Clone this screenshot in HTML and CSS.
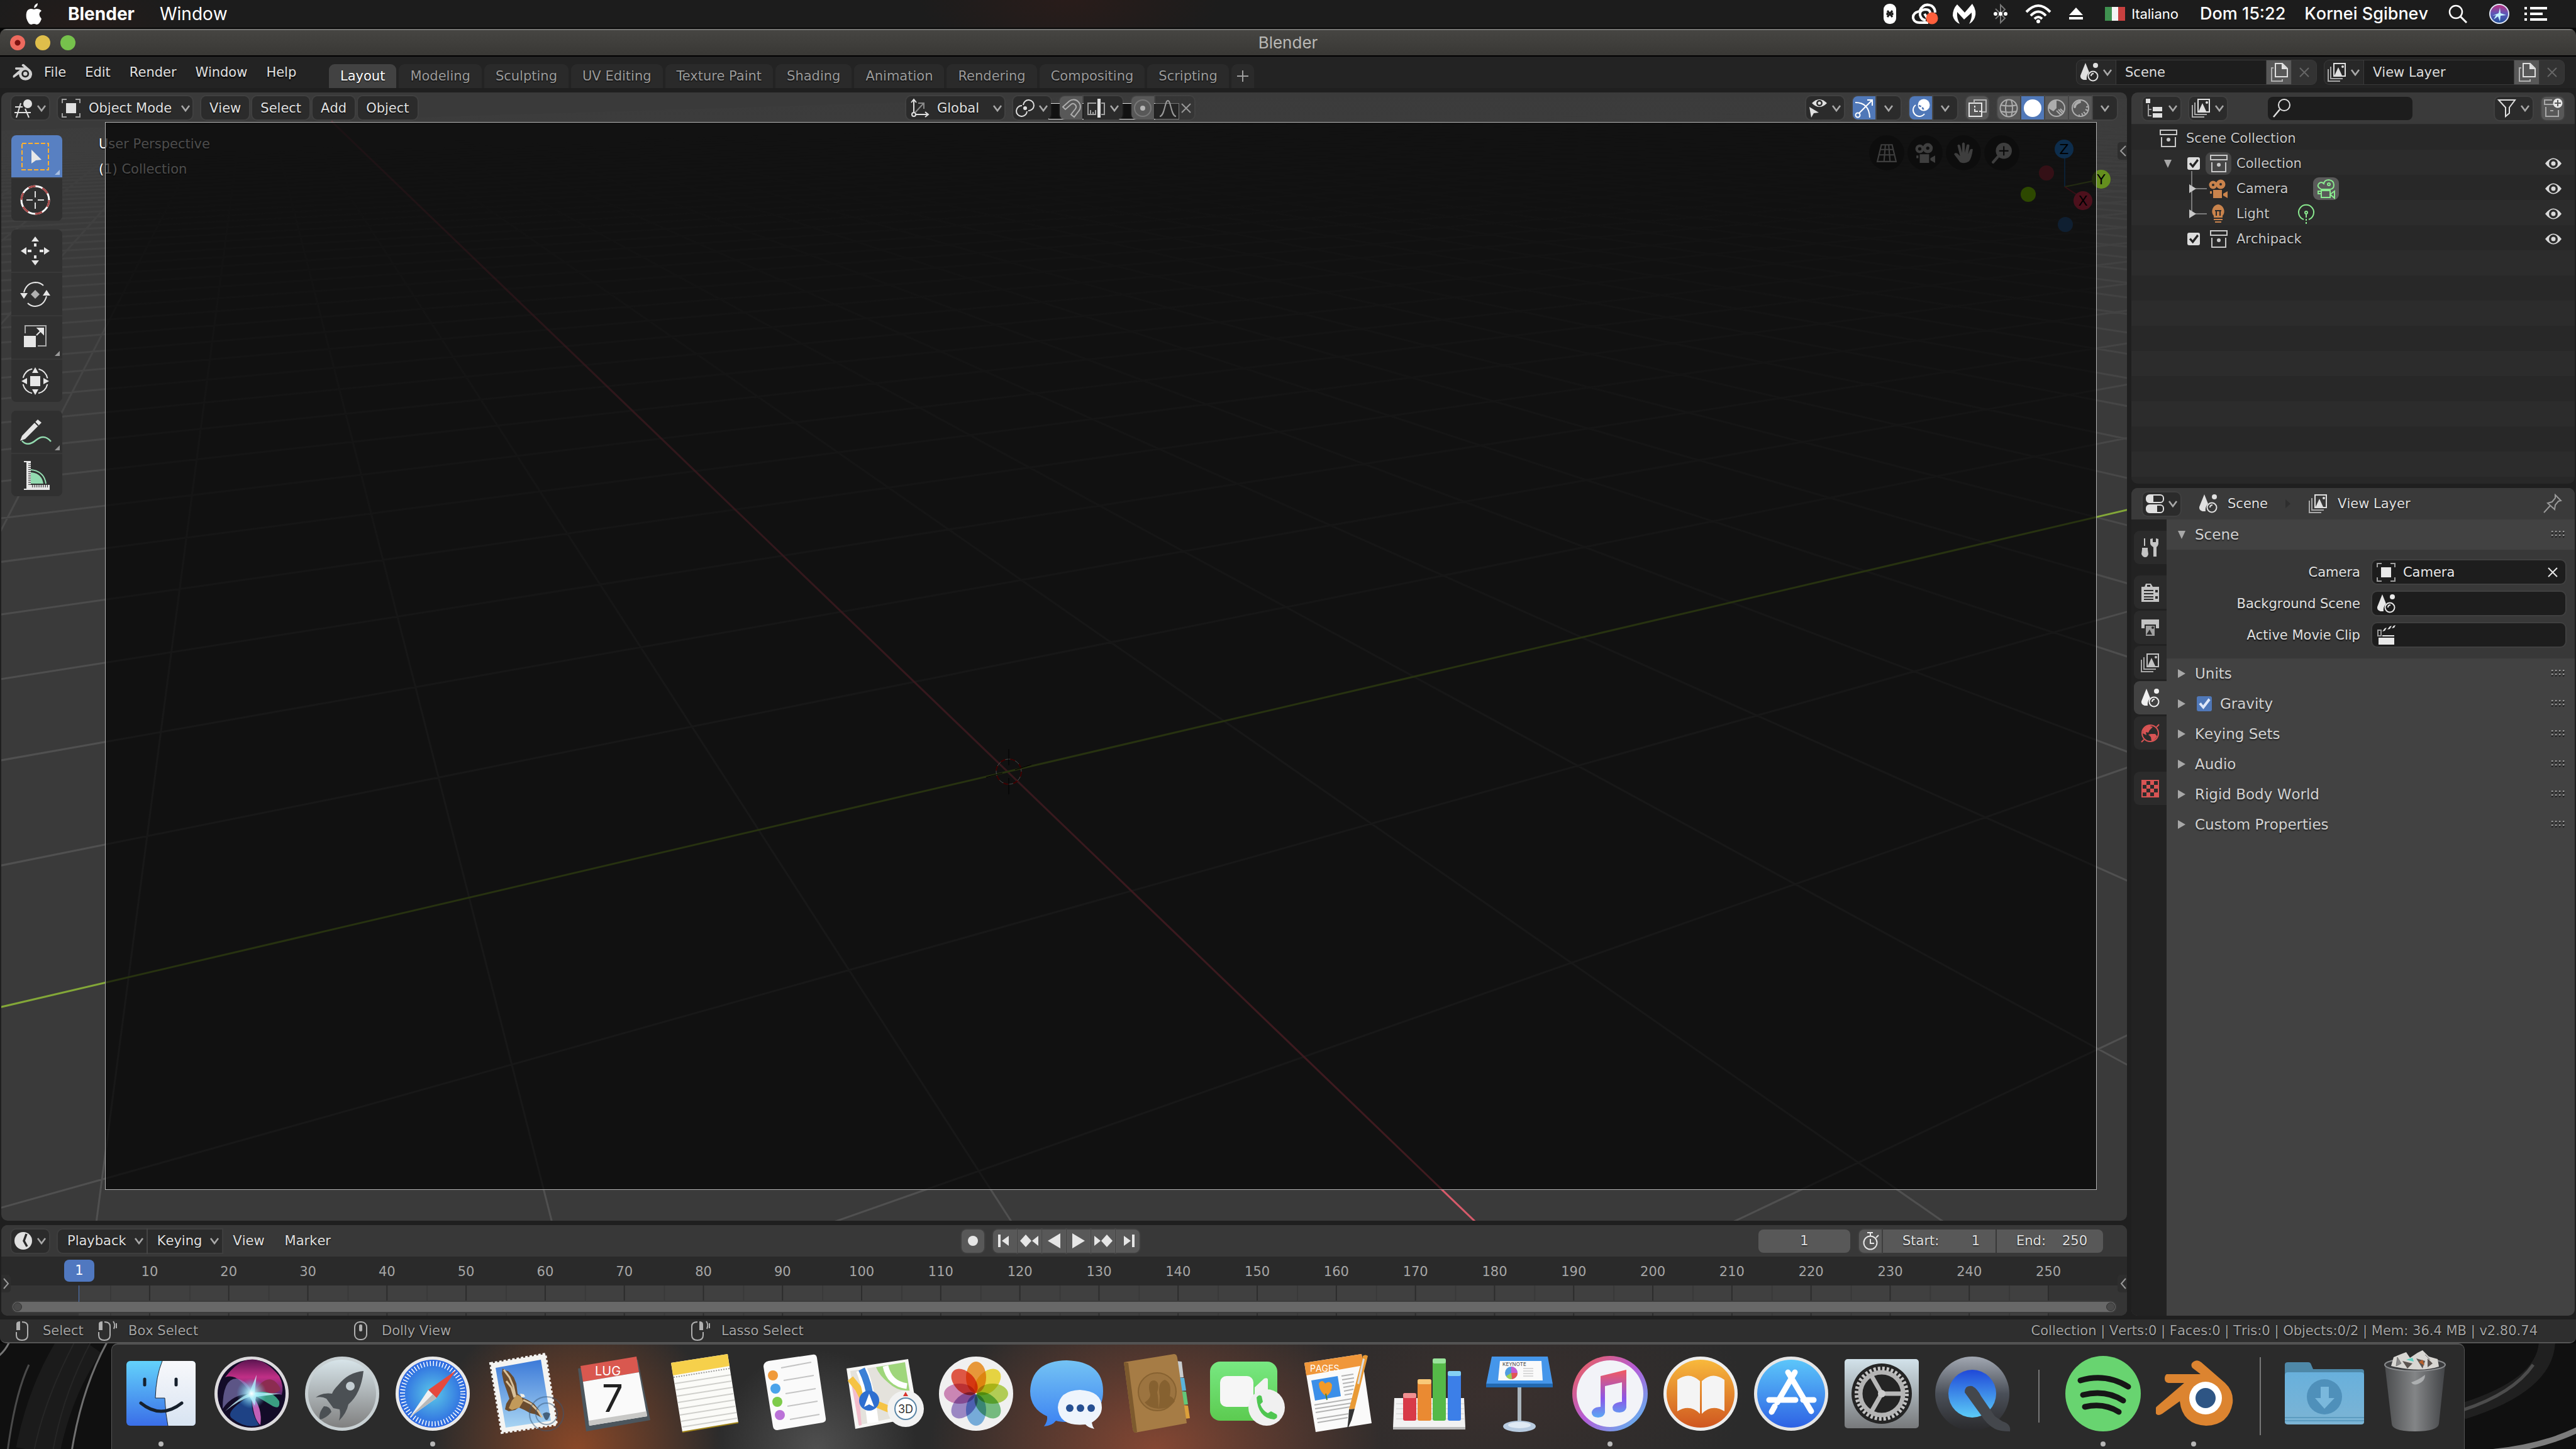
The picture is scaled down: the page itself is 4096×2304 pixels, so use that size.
FILE: index.html
```html
<!doctype html>
<html lang="it">
  <head>
    <meta charset="utf-8">
    <meta name="viewport" content="width=device-width, initial-scale=1">
    <title>Blender</title>
    <link rel="stylesheet" href="styles.css">
  </head>

  <body>
    <!-- icon sprite -->
    <svg class="sprite" aria-hidden="true">
      <symbol id="chev" viewBox="0 0 18 18"><path d="M3 5l6 8 6-8" fill="none" stroke="#a8a8a8" stroke-width="2.6"/></symbol>
      <symbol id="cross" viewBox="0 0 18 18"><path d="M2 2l14 14M16 2L2 16" fill="none" stroke="currentColor" stroke-width="2"/></symbol>
      <symbol id="tri" viewBox="0 0 12 14"><path d="M0 0l12 7L0 14z" fill="#a8a8a8"/></symbol>
      <symbol id="tri-down" viewBox="0 0 12 14"><path d="M0 1h12L6 14z" fill="#a8a8a8"/></symbol>
      <symbol id="view3d" viewBox="0 0 32 32"><circle cx="23" cy="9" r="7" fill="currentColor"/><path d="M3 14h12M2 23h26M12 8L5 31M19 17l6 14" fill="none" stroke="currentColor" stroke-width="2"/></symbol>
      <symbol id="object" viewBox="0 0 32 32"><path d="M8 8h16v16H8z" fill="currentColor"/><path d="M2 8V2h7M23 2h7v6M30 24v6h-7M9 30H2v-6" fill="none" stroke="#a0a0a0" stroke-width="2"/></symbol>
      <symbol id="axes" viewBox="0 0 32 32"><g fill="none" stroke="currentColor" stroke-width="2"><path d="M7 22V3M3 7l4-5 4 5M10 26h19M25 22l5 4-5 4"/><circle cx="7" cy="26" r="3"/></g><path d="M9 23L22 9M14 8h9v9" fill="none" stroke="#8a8a8a" stroke-width="2"/></symbol>
      <symbol id="pivot" viewBox="0 0 32 32"><g fill="none" stroke="currentColor" stroke-width="2"><path d="M13 11a8.500 8.500 0 1 1 8 9M19 21a8.500 8.500 0 1 1-8-9"/></g><circle cx="16" cy="16" r="3" fill="currentColor"/></symbol>
      <symbol id="magnet" viewBox="0 0 32 32"><path d="M3 14L13 5a11 11 0 0 1 15 16l-7 9-5-4 7-9a5 5 0 0 0-7-7l-9 8z" fill="none" stroke="currentColor" stroke-width="2"/></symbol>
      <symbol id="increment" viewBox="0 0 32 32"><path d="M16 8H3v18h13M7 26v-7M11 26v-4M15 26v-7M24 8h5v18h-5" fill="none" stroke="#a0a0a0" stroke-width="2"/><path d="M18 1h5v30h-5z" fill="currentColor"/></symbol>
      <symbol id="prop" viewBox="0 0 32 32"><circle cx="16" cy="16" r="13" fill="none" stroke="#777" stroke-width="2"/><circle cx="16" cy="16" r="4" fill="#b5b5b5"/></symbol>
      <symbol id="falloff" viewBox="0 0 32 32"><path d="M3 29C11 29 11 4 16 4s5 25 13 25" fill="none" stroke="currentColor" stroke-width="2"/></symbol>
      <symbol id="visibility" viewBox="0 0 32 32"><path d="M6 8Q18-4 30 8 18 20 6 8z" fill="currentColor"/><circle cx="18" cy="8" r="5" fill="#2b2b2b"/><circle cx="18" cy="8" r="2.500" fill="currentColor"/><path d="M2 14l15 9-8 1-4 7z" fill="currentColor"/></symbol>
      <symbol id="gizmo-ico" viewBox="0 0 32 32"><g fill="none" stroke="currentColor" stroke-width="2"><path d="M2 7Q24 7 25 31M8 24L29 3M21 3h8v9"/><circle cx="6" cy="27" r="3.500"/></g></symbol>
      <symbol id="overlay-ico" viewBox="0 0 32 32"><circle cx="21" cy="11" r="9.500" fill="currentColor"/><path d="M8 11a10 10 0 1 0 14 14" fill="none" stroke="currentColor" stroke-width="2"/><path d="M13 12a10 10 0 0 1 8 8" fill="none" stroke="#4f76b6" stroke-width="2.500" stroke-dasharray="4 2"/></symbol>
      <symbol id="xray" viewBox="0 0 32 32"><path d="M3 8h20v21H3z" fill="none" stroke="currentColor" stroke-width="2"/><path d="M11 8V3h19v19h-6" fill="none" stroke="#b5b5b5" stroke-width="2"/><path d="M12 12v3M12 17v4h5M19 21h4" fill="none" stroke="currentColor" stroke-width="2"/></symbol>
      <symbol id="wire" viewBox="0 0 32 32"><g fill="none" stroke="currentColor" stroke-width="2"><circle cx="16" cy="16" r="13.500"/><path d="M3 11q13 3 26 0M3 21q13 3 26 0M13 3q-4 13 0 26M20 3q4 13 0 26"/></g></symbol>
      <symbol id="solid" viewBox="0 0 32 32"><circle cx="16" cy="16" r="14" fill="#fff"/></symbol>
      <symbol id="matprev" viewBox="0 0 32 32"><circle cx="16" cy="16" r="13" fill="none" stroke="currentColor" stroke-width="2"/><path d="M16 3v13l-5 5-8-5A13 13 0 0 1 16 3z" fill="currentColor"/><path d="M16 20l7 7M19 18l7 7M22 17l5 5" stroke="currentColor" stroke-width="2"/></symbol>
      <symbol id="rendered" viewBox="0 0 32 32"><circle cx="16" cy="16" r="13" fill="none" stroke="currentColor" stroke-width="2"/><path d="M7 14q1-6 8-8" fill="none" stroke="currentColor" stroke-width="4" stroke-linecap="round"/><path d="M14 26v3M18 24l2 4M21 22l3 3M24 18l4 2M25 14h4" stroke="currentColor" stroke-width="2"/></symbol>
      <symbol id="scene" viewBox="0 0 32 32"><path d="M10 1l6 15q-5 5-4 12H7q-6-2-5-7z" fill="currentColor"/><circle cx="26" cy="5" r="4" fill="currentColor"/><circle cx="22" cy="22" r="7.500" fill="none" stroke="currentColor" stroke-width="2"/><path d="M19 22q0-4 4-4" fill="none" stroke="currentColor" stroke-width="2"/></symbol>
      <symbol id="layers" viewBox="0 0 32 32"><path d="M11 2h18v20H11z" fill="none" stroke="currentColor" stroke-width="2"/><path d="M12 21l6-13 6 13z" fill="currentColor"/><circle cx="25" cy="7" r="2" fill="currentColor"/><path d="M6 7v19h19M2 11v19h19" fill="none" stroke="#a8a8a8" stroke-width="2"/></symbol>
      <symbol id="copy" viewBox="0 0 32 32"><path d="M10 2h11l8 8v13H10z" fill="none" stroke="currentColor" stroke-width="2"/><path d="M20 2l9 9h-9z" fill="currentColor"/><path d="M7 9H4v21h17v-3" fill="none" stroke="#b0b0b0" stroke-width="2"/></symbol>
      <symbol id="tree" viewBox="0 0 32 32"><path d="M2 1h7v7H2zM13 14h15v7H13zM13 24h15v7H13z" fill="currentColor"/><path d="M6 10v18h5M6 18h5" fill="none" stroke="#a0a0a0" stroke-width="2"/></symbol>
      <symbol id="search" viewBox="0 0 32 32"><circle cx="20" cy="11" r="9" fill="none" stroke="currentColor" stroke-width="2"/><path d="M13 18L3 30" stroke="currentColor" stroke-width="2.500"/></symbol>
      <symbol id="filter" viewBox="0 0 32 32"><path d="M3 3h26l-9 12v9l-6 5V15z" fill="none" stroke="currentColor" stroke-width="2"/></symbol>
      <symbol id="newcoll" viewBox="0 0 32 32"><path d="M15 3H3v7h14M5 14v15h20V19M12 20h5" fill="none" stroke="#a8a8a8" stroke-width="2"/><circle cx="24" cy="8" r="7.500" fill="currentColor"/><path d="M24 3v10M19 8h10" stroke="#585858" stroke-width="2"/></symbol>
      <symbol id="coll" viewBox="0 0 32 32"><path d="M3 3h26v7H3zM5 14v15h22V14" fill="none" stroke="#c8c8c8" stroke-width="2"/><circle cx="16" cy="18" r="3" fill="#c8c8c8"/></symbol>
      <symbol id="cam" viewBox="0 0 32 32"><circle cx="8" cy="10" r="6.500"/><circle cx="20" cy="9" r="7.500"/><path d="M8 18h14v13H8zM3 20h3v4H3zM24 24l7-4v11l-7-4z"/></symbol>
      <symbol id="bulb" viewBox="0 0 32 32"><path d="M16 1a11 11 0 0 1 7 18v3H9v-3a11 11 0 0 1 7-18zM9 24h14v2H9zM11 28h10v2H11z" fill="#c9834c"/><path d="M11 11h10M13 11v8M19 11v8" stroke="#2b2b2b" stroke-width="2"/></symbol>
      <symbol id="eye" viewBox="0 0 32 32"><path d="M3 16Q16-1 29 16 16 33 3 16z" fill="#dadada"/><circle cx="16" cy="16" r="7" fill="#2b2b2b"/><circle cx="16" cy="16" r="3.500" fill="#dadada"/></symbol>
      <symbol id="props" viewBox="0 0 32 32"><rect x="3" y="2" width="27" height="12" rx="5" fill="none" stroke="currentColor" stroke-width="2"/><path d="M14 2H8a5 5 0 0 0-5 6q0 6 5 6h6zM3 24q0-6 5-6h12v12H8q-5 0-5-6z" fill="currentColor"/><rect x="3" y="18" width="27" height="12" rx="5" fill="none" stroke="currentColor" stroke-width="2"/></symbol>
      <symbol id="pin" viewBox="0 0 32 32"><path d="M21 2l9 9-4 1-5 6-1 7-11-10 7-2 5-6zM13 19L3 30" fill="none" stroke="#999" stroke-width="2"/></symbol>
      <symbol id="clap" viewBox="0 0 32 32"><path d="M4 20h25v11H4zM10 16h19v2H10z" fill="currentColor"/><path d="M3 8h5v9H3z" fill="none" stroke="#999" stroke-width="2"/><path d="M10 10l4-5 3-1-3 5zM18 7l4-5 3-1-3 5zM25 5l3-4 3-1-2 4z" fill="currentColor"/></symbol>
      <symbol id="tools" viewBox="0 0 32 32"><path d="M7 1v12" stroke="currentColor" stroke-width="2"/><path d="M3 16h9v3l1 7q-1 5-5 5t-6-5l1-7zM16 2l4-1v6h5V1l4 1v8q-1 4-3 5v15h-5V15q-5-3-5-6z" fill="currentColor"/></symbol>
      <symbol id="render" viewBox="0 0 32 32"><path d="M2 7h5l2-5h8l3 5h10v24H2z" fill="currentColor"/><path d="M6 13h15M6 18h15M6 23h15M6 27h15" stroke="#2b2b2b" stroke-width="2"/><path d="M24 12h4v4h-4zM24 22h4v4h-4zM11 4h5v3h-5z" fill="#2b2b2b"/></symbol>
      <symbol id="output" viewBox="0 0 32 32"><path d="M2 3h28v14H2z" fill="currentColor"/><path d="M8 12h16v18H8z" fill="#a0a0a0" stroke="#2b2b2b" stroke-width="2"/><path d="M10 27l5-8 4 8z" fill="#2b2b2b"/><circle cx="20" cy="16" r="2" fill="#2b2b2b"/></symbol>
      <symbol id="world" viewBox="0 0 32 32"><circle cx="16" cy="16" r="13" fill="none" stroke="#d85454" stroke-width="2"/><path d="M5 9l8-6 7 3-5 5-2 4-4-1 1 5-6-3zM17 17h7l3 4-6 7h-3l-1-6-4-4z" fill="#d85454"/><path d="M26 6l4-4M6 26l-4 4" stroke="#d85454" stroke-width="2"/></symbol>
      <symbol id="texture" viewBox="0 0 32 32"><path d="M2 2h28v28H2z" fill="#d85454"/><path d="M10 4h6v6h-6zM22 4h6v6h-6zM4 10h6v6H4zM16 10h6v6h-6zM10 16h6v6h-6zM22 16h6v6h-6zM4 22h6v6H4zM16 22h6v6h-6z" fill="#2b2b2b"/></symbol>
      <symbol id="clock" viewBox="0 0 32 32"><circle cx="16" cy="16" r="14" fill="currentColor"/><path d="M21 5l-4 11 5 9" fill="none" stroke="#2b2b2b" stroke-width="3.500"/></symbol>
      <symbol id="stopwatch" viewBox="0 0 32 32"><circle cx="16" cy="19" r="10.500" fill="none" stroke="currentColor" stroke-width="2"/><path d="M11 3h9M16 3v6M25 11l4-4M16 13v7h6" fill="none" stroke="currentColor" stroke-width="2"/></symbol>
      <symbol id="dot" viewBox="0 0 32 32"><circle cx="16" cy="16" r="8" fill="currentColor"/></symbol>
      <symbol id="first" viewBox="0 0 32 32"><path d="M5 6h4v20H5zM22 8v16L11 16z" fill="currentColor"/></symbol>
      <symbol id="prevkey" viewBox="0 0 32 32"><path d="M10 6l9 10-9 10L1 16zM30 8v16L20 16z" fill="currentColor"/></symbol>
      <symbol id="playrev" viewBox="0 0 32 32"><path d="M26 4v24L6 16z" fill="currentColor"/></symbol>
      <symbol id="lmb" viewBox="0 0 32 32"><path d="M7 5q0-4 6-4v14H7z" fill="#b0b0b0"/><path d="M16 2q9 0 9 7v14q0 8-9 8t-9-8v-5" fill="none" stroke="#b0b0b0" stroke-width="2"/></symbol>
      <symbol id="mmb" viewBox="0 0 32 32"><rect x="6" y="2" width="19" height="28" rx="8" fill="none" stroke="#b0b0b0" stroke-width="2"/><rect x="13" y="6" width="5" height="11" rx="2" fill="#b0b0b0"/></symbol>
      <symbol id="blender" viewBox="0 0 124 120"><path d="M17 29H71L58 19Q54 13 60 9 66 5 72 10L110 43Q124 56 122 75 116 110 80 111 42 109 38 72L10 92Q2 97-1 90-3 84 3 79L45 43H20Q14 42 14 36 14 31 17 29z"/></symbol>
    </svg>

    <header class="menubar">
      <nav class="menubar-left">
        <a href="#" class="apple" aria-label="Apple"><svg viewBox="0 0 28 34"><path d="M20 0q0 6-6 8 0-6 6-8zM14 10q7-3 12 2-7 5 0 13-3 9-8 9-4-2-8 0-5 0-8-10Q0 10 9 9q2 0 5 1z" fill="#fff"/></svg></a>
        <a href="#" class="app-name">Blender</a>
        <a href="#">Window</a>
      </nav>
      <div class="menubar-right">
        <svg class="m-cap" viewBox="0 0 22 32"><rect x="1" width="20" height="32" rx="9" fill="#fff"/><path d="M7 11l8 10M15 11L7 21M7 14v4M15 14v4" stroke="#1d1d1d" stroke-width="3"/></svg>
        <svg class="m-cc" viewBox="0 0 42 32"><path d="M12 12Q18-2 31 3q6 4 6 11M12 12Q1 14 2 23q2 7 10 7h14M27 22q6-13-6-13-9 1-8 9 2 8 9 8M20 16l8 12" fill="none" stroke="#fff" stroke-width="4"/><circle cx="32" cy="23" r="9.500" fill="#ff5f3c"/></svg>
        <svg class="m-mal" viewBox="0 0 38 32"><path d="M8 1l12 13L32 0q8 12 4 22-3 7-9 10 5-9 4-18L19 25 8 13Q7 23 12 32 3 28 1 19q0-11 7-18z" fill="#fff"/></svg>
        <svg class="m-bt" viewBox="0 0 22 32"><path d="M3 8l15 15-7 7V2l7 7L3 24" fill="none" stroke="#777" stroke-width="2"/><circle cx="3" cy="16" r="3" fill="#fff"/><circle cx="11" cy="16" r="3" fill="#fff"/><circle cx="19" cy="16" r="3" fill="#fff"/></svg>
        <svg class="m-wifi" viewBox="0 0 42 30"><path d="M2 12q19-20 38 0M9 18q12-13 24 0M15 23q6-6 12 0" fill="none" stroke="#fff" stroke-width="4"/><circle cx="21" cy="27" r="3" fill="#fff"/></svg>
        <svg class="m-eject" viewBox="0 0 24 20"><path d="M12 0l11 12H1zM1 15h22v4H1z" fill="#fff"/></svg>
        <svg class="m-flag" viewBox="0 0 32 22"><path d="M0 0h11v22H0z" fill="#3f9150"/><path d="M11 0h10v22H11z" fill="#f4f4f4"/><path d="M21 0h11v22H21z" fill="#c8403f"/></svg>
        <span class="lang">Italiano</span>
        <span class="clock">Dom 15:22</span>
        <span class="user">Kornei Sgibnev</span>
        <svg class="m-search" viewBox="0 0 30 30"><circle cx="12" cy="12" r="10" fill="none" stroke="#fff" stroke-width="2.500"/><path d="M19 19l10 10" stroke="#fff" stroke-width="3"/></svg>
        <svg class="m-siri" viewBox="0 0 32 32"><circle cx="16" cy="16" r="15" fill="url(#siriMini)" stroke="#dfe6f5" stroke-width="2"/><path d="M5 19l10-4 2-9 1 9 9 3-9 1-1 9-3-8-7 5 4-7z" fill="#c4f4ff"/></svg>
        <svg class="m-list" viewBox="0 0 36 22"><path d="M0 0h4v4H0zM9 0h27v4H9zM0 9h4v4H0zM9 9h20v4H9zM0 18h4v4H0zM9 18h27v4H9z" fill="#fff"/></svg>
      </div>
    </header>

    <main class="window">
      <div class="titlebar">
        <div class="lights">
          <button class="light red" aria-label="Close"></button>
          <button class="light yellow" aria-label="Minimize"></button>
          <button class="light green" aria-label="Zoom"></button>
        </div>
        <h1>Blender</h1>
      </div>

      <div class="topbar">
        <nav class="menus">
          <button class="logo" aria-label="Blender"><svg viewBox="0 0 124 120"><use href="#blender" fill="#d0d0d0" width="124" height="120"/><circle cx="79" cy="69" r="24" fill="#232323"/><circle cx="79" cy="69" r="13" fill="#d0d0d0"/></svg></button>
          <button>File</button>
          <button>Edit</button>
          <button>Render</button>
          <button>Window</button>
          <button>Help</button>
        </nav>
        <nav class="tabs">
          <button class="active">Layout</button>
          <button>Modeling</button>
          <button>Sculpting</button>
          <button>UV Editing</button>
          <button>Texture Paint</button>
          <button>Shading</button>
          <button>Animation</button>
          <button>Rendering</button>
          <button>Compositing</button>
          <button>Scripting</button>
          <button class="add-tab" aria-label="Add Workspace"><svg viewBox="0 0 18 18"><path d="M9 0v18M0 9h18" stroke="#a0a0a0" stroke-width="2"/></svg></button>
        </nav>
        <div class="datablock">
          <button class="drop" aria-label="Browse Scene"><svg class="ico"><use href="#scene"/></svg><svg class="chev"><use href="#chev"/></svg></button>
          <input type="text" value="Scene" aria-label="Scene">
          <button class="lit" aria-label="New Scene"><svg class="ico"><use href="#copy"/></svg></button>
          <button class="off" aria-label="Remove Scene"><svg class="chev"><use href="#cross"/></svg></button>
        </div>
        <div class="datablock">
          <button class="drop" aria-label="Browse View Layer"><svg class="ico"><use href="#layers"/></svg><svg class="chev"><use href="#chev"/></svg></button>
          <input type="text" value="View Layer" aria-label="View Layer">
          <button class="lit" aria-label="New View Layer"><svg class="ico"><use href="#copy"/></svg></button>
          <button class="off" aria-label="Remove View Layer"><svg class="chev"><use href="#cross"/></svg></button>
        </div>
      </div>

      <div class="areas">
        <div class="main-col">
          <section class="viewport">
            <svg class="scene-grid" viewBox="0 0 3380 1794" preserveAspectRatio="xMidYMid slice">
              <defs>
                <linearGradient id="fade" gradientUnits="userSpaceOnUse" x1="0" y1="0" x2="0" y2="1000">
                  <stop offset="0" stop-color="#4e4e4e" stop-opacity=".05"/>
                  <stop offset=".4" stop-color="#4e4e4e" stop-opacity=".5"/>
                  <stop offset="1" stop-color="#505050"/>
                </linearGradient>
                <linearGradient id="fadeX" gradientUnits="userSpaceOnUse" x1="0" y1="0" x2="0" y2="1700">
                  <stop offset="0" stop-color="#904050" stop-opacity=".3"/>
                  <stop offset=".3" stop-color="#b05060" stop-opacity=".9"/>
                  <stop offset="1" stop-color="#d65a6a"/>
                </linearGradient>
              </defs>
              <path id="grid-lines" fill="none" stroke="url(#fade)" stroke-width="3"/>
              <path id="axis-x" fill="none" stroke="url(#fadeX)" stroke-width="3"/>
              <path id="axis-y" fill="none" stroke="#83a738" stroke-width="3"/>
              <circle cx="1602" cy="1080" r="20" fill="none" stroke="#fff" stroke-width="1"/>
              <circle cx="1602" cy="1080" r="20" fill="none" stroke="#d00000" stroke-width="2" stroke-dasharray="8 8"/>
              <path d="M1602 1044v26M1602 1090v26M1566 1089l26-7M1612 1077l26-8" stroke="#000" stroke-width="1"/>
            </svg>
            <div class="view-info">
              <span>User Perspective</span>
              <span>(1) Collection</span>
            </div>
            <div class="nav">
              <button aria-label="Toggle Perspective"><svg viewBox="0 0 32 32"><path d="M8 4h16l6 25H2zM7 11h18M5 19h22M14 4l-2 25M19 4l2 25" fill="none" stroke="#d0d0d0" stroke-width="2"/></svg></button>
              <button aria-label="Camera View"><svg viewBox="0 0 32 32" fill="#d0d0d0"><use href="#cam" width="32" height="32"/><circle cx="8" cy="10" r="2.500" fill="#303030"/><circle cx="20" cy="9" r="2.500" fill="#303030"/></svg></button>
              <button aria-label="Move View"><svg viewBox="0 0 32 32"><path d="M11 30L2 18q1-3 5-1l4 4L7 5q2-3 4 0l3 11V2q2-3 4 0v14l3-12q3-2 4 1l-2 13 3-7q3-2 4 0-2 14-6 18-6 4-13 1z" fill="#d0d0d0"/></svg></button>
              <button aria-label="Zoom View"><svg viewBox="0 0 32 32"><circle cx="19" cy="13" r="12" fill="#d0d0d0"/><path d="M10 22l-7 8" stroke="#d0d0d0" stroke-width="4" stroke-linecap="round"/><path d="M19 6v14M12 13h14" stroke="#222" stroke-width="2"/></svg></button>
            </div>
            <svg class="gizmo" viewBox="0 0 160 160">
              <g stroke-width="2"><path d="M79 80V34" stroke="#2b6bb0"/><path d="M79 80l44-9" stroke="#76923a"/><path d="M79 80l20 13" stroke="#b03048"/></g>
              <circle cx="50" cy="58" r="12" fill="#b0384a"/><circle cx="21" cy="92" r="12" fill="#96f000"/><circle cx="80" cy="140" r="12" fill="#326aa4"/>
              <circle cx="78" cy="20" r="15" fill="#2c96ff"/><circle cx="137" cy="68" r="15" fill="#658f1e"/><circle cx="108" cy="102" r="15" fill="#ff3860"/>
              <text x="78" y="28">Z</text><text x="137" y="76">Y</text><text x="108" y="110">X</text>
            </svg>
            <div class="passepartout"></div>

            <div class="vp-header">
              <div class="group">
                <button class="drop" aria-label="Editor Type"><svg class="ico"><use href="#view3d"/></svg><svg class="chev"><use href="#chev"/></svg></button>
                <label class="pick"><svg class="ico"><use href="#object"/></svg><select aria-label="Mode"><option>Object Mode</option></select><svg class="chev"><use href="#chev"/></svg></label>
                <div class="textmenus">
                  <button>View</button>
                  <button>Select</button>
                  <button>Add</button>
                  <button>Object</button>
                </div>
              </div>
              <div class="group center">
                <div class="cam-frame"></div>
                <label class="pick wide"><svg class="ico"><use href="#axes"/></svg><select aria-label="Orientation"><option>Global</option></select><svg class="chev"><use href="#chev"/></svg></label>
                <button class="drop" aria-label="Pivot Point"><svg class="ico"><use href="#pivot"/></svg><svg class="chev"><use href="#chev"/></svg></button>
                <div class="joined">
                  <button class="tog dim" aria-label="Snap"><svg class="ico"><use href="#magnet"/></svg></button>
                  <button class="drop" aria-label="Snap To"><svg class="ico"><use href="#increment"/></svg><svg class="chev"><use href="#chev"/></svg></button>
                </div>
                <div class="joined">
                  <button class="tog" aria-label="Proportional Editing"><svg class="ico"><use href="#prop"/></svg></button>
                  <button class="drop faint" aria-label="Falloff"><svg class="ico"><use href="#falloff"/></svg><svg class="chev"><use href="#cross"/></svg></button>
                </div>
              </div>
              <div class="group end">
                <button class="drop" aria-label="Visibility"><svg class="ico"><use href="#visibility"/></svg><svg class="chev"><use href="#chev"/></svg></button>
                <div class="joined">
                  <button class="tog on" aria-label="Gizmos"><svg class="ico"><use href="#gizmo-ico"/></svg></button>
                  <button class="arrow" aria-label="Gizmo Options"><svg class="chev"><use href="#chev"/></svg></button>
                </div>
                <div class="joined">
                  <button class="tog on" aria-label="Overlays"><svg class="ico"><use href="#overlay-ico"/></svg></button>
                  <button class="arrow" aria-label="Overlay Options"><svg class="chev"><use href="#chev"/></svg></button>
                </div>
                <button class="tog" aria-label="X-Ray"><svg class="ico"><use href="#xray"/></svg></button>
                <div class="joined">
                  <button class="tog dim" aria-label="Wireframe"><svg class="ico"><use href="#wire"/></svg></button>
                  <button class="tog on" aria-label="Solid"><svg class="ico"><use href="#solid"/></svg></button>
                  <button class="tog dim" aria-label="Look Dev"><svg class="ico"><use href="#matprev"/></svg></button>
                  <button class="tog dim" aria-label="Rendered"><svg class="ico"><use href="#rendered"/></svg></button>
                  <button class="arrow" aria-label="Shading Options"><svg class="chev"><use href="#chev"/></svg></button>
                </div>
              </div>
            </div>

            <div class="toolshelf">
              <div class="toolset">
                <button class="on more" aria-label="Select Box"><svg viewBox="0 0 48 48"><rect x="3" y="3" width="42" height="42" fill="none" stroke="#ffb02e" stroke-width="2" stroke-dasharray="7 3"/><path d="M18 13l16 16-9 1-7 5z" fill="#e8e8e8"/></svg></button>
                <button aria-label="Cursor"><svg viewBox="0 0 48 48"><circle cx="24" cy="24" r="22" fill="none" stroke="#fff" stroke-width="3"/><circle cx="24" cy="24" r="22" fill="none" stroke="#a94a4a" stroke-width="3" stroke-dasharray="11.500 11.500"/><path d="M24 10v10M24 28v10M10 24h10M28 24h10" stroke="#ddd" stroke-width="2"/></svg></button>
              </div>
              <div class="toolset">
                <button aria-label="Move"><svg viewBox="0 0 48 48"><path d="M24 1l6 8H18zM24 47l6-8H18zM1 24l9-6v12zM47 24l-9-6v12zM22 12h4v5h-4zM22 31h4v5h-4zM12 22h6v4h-6zM31 22h6v4h-6z" fill="#e6e6e6"/></svg></button>
                <button aria-label="Rotate"><svg viewBox="0 0 48 48"><path d="M6 21Q10 6 24 5q8 0 13 5M42 27Q38 42 24 43q-7 0-12-5" fill="none" stroke="#e6e6e6" stroke-width="2"/><path d="M0 22h12L6 31zM36 26h12l-6-9z" fill="#e6e6e6"/><path d="M24 17l7 7-7 7-7-7z" fill="#b0b0b0"/></svg></button>
                <button class="more" aria-label="Scale"><svg viewBox="0 0 48 48"><path d="M8 17V5h33v32H28" fill="none" stroke="#aaa" stroke-width="2"/><path d="M6 21h19v18H6z" fill="#e6e6e6"/><path d="M26 20l7-7M28 9h9v9z" stroke="#e6e6e6" stroke-width="2" fill="#e6e6e6"/></svg></button>
                <button aria-label="Transform"><svg viewBox="0 0 48 48"><circle cx="24" cy="24" r="20" fill="none" stroke="#e6e6e6" stroke-width="2" stroke-dasharray="21 10.400" stroke-dashoffset="-5"/><path d="M16 16h16v16H16zM24 2l5 9H19zM24 46l5-9H19zM2 24l9-5v10zM46 24l-9-5v10z" fill="#e6e6e6"/></svg></button>
              </div>
              <div class="toolset">
                <button class="more" aria-label="Annotate"><svg viewBox="0 0 48 48"><path d="M0 38l3-8L28 4l6 5L8 35z" fill="#e6e6e6"/><path d="M3 38q9 10 22-1t24 2" fill="none" stroke="#93dbb0" stroke-width="2.500"/><path d="M23 8l6 6" stroke="#303030" stroke-width="2"/></svg></button>
                <button aria-label="Measure"><svg viewBox="0 0 48 48"><path d="M17 15q21 2 24 22" fill="none" stroke="#93dbb0" stroke-width="2"/><path d="M17 19q17 1 20 18H17z" fill="#93dbb0"/><path d="M6 1h11v38h30v8H6v-2h4V3H6z" fill="#e6e6e6"/><path d="M15 5v34" stroke="#303030" stroke-width="4" stroke-dasharray="1 2"/><path d="M19 41h27" stroke="#303030" stroke-width="4" stroke-dasharray="1 2"/></svg></button>
              </div>
            </div>
            <button class="npanel" aria-label="Show Sidebar"><svg viewBox="0 0 12 18"><path d="M11 1L3 9l8 8" fill="none" stroke="#999" stroke-width="2"/></svg></button>
          </section>

          <section class="timeline">
            <div class="tl-header">
              <div class="group">
                <button class="drop" aria-label="Editor Type"><svg class="ico"><use href="#clock"/></svg><svg class="chev"><use href="#chev"/></svg></button>
                <div class="joined">
                  <button class="word">Playback<svg class="chev"><use href="#chev"/></svg></button>
                  <button class="word">Keying<svg class="chev"><use href="#chev"/></svg></button>
                  <button class="plain">View</button>
                  <button class="plain">Marker</button>
                </div>
              </div>
              <div class="group transport">
                <button class="tog" aria-label="Auto Keying"><svg class="ico"><use href="#dot"/></svg></button>
                <div class="joined">
                  <button class="tog" aria-label="Jump to Start"><svg class="ico"><use href="#first"/></svg></button>
                  <button class="tog" aria-label="Previous Keyframe"><svg class="ico"><use href="#prevkey"/></svg></button>
                  <button class="tog" aria-label="Play Reverse"><svg class="ico"><use href="#playrev"/></svg></button>
                  <button class="tog" aria-label="Play"><svg class="ico flip"><use href="#playrev"/></svg></button>
                  <button class="tog" aria-label="Next Keyframe"><svg class="ico flip"><use href="#prevkey"/></svg></button>
                  <button class="tog" aria-label="Jump to End"><svg class="ico flip"><use href="#first"/></svg></button>
                </div>
              </div>
              <div class="group end frames">
                <input class="num current" type="text" value="1" aria-label="Current Frame">
                <div class="joined">
                  <button class="tog" aria-label="Preview Range"><svg class="ico"><use href="#stopwatch"/></svg></button>
                  <label class="range">Start:<input type="text" value="1"></label>
                  <label class="range last">End:<input type="text" value="250"></label>
                </div>
              </div>
            </div>
            <div class="ruler">
              <span>10</span><span>20</span><span>30</span><span>40</span><span>50</span>
              <span>60</span><span>70</span><span>80</span><span>90</span><span>100</span>
              <span>110</span><span>120</span><span>130</span><span>140</span><span>150</span>
              <span>160</span><span>170</span><span>180</span><span>190</span><span>200</span>
              <span>210</span><span>220</span><span>230</span><span>240</span><span>250</span>
            </div>
            <div class="tracks">
              <div class="lines"></div>
              <div class="scrollbar"><i></i><i></i></div>
            </div>
            <div class="playhead">1</div>
            <button class="tl-left" aria-label="Show Channels"><svg viewBox="0 0 12 18"><path d="M2 1l7 8-7 8" fill="none" stroke="#999" stroke-width="2"/></svg></button>
            <button class="tl-right" aria-label="Show Sidebar"><svg viewBox="0 0 12 18"><path d="M11 1L4 9l7 8" fill="none" stroke="#999" stroke-width="2"/></svg></button>
          </section>
        </div>

        <aside class="side-col">
          <section class="outliner">
            <div class="ol-header">
              <button class="drop" aria-label="Editor Type"><svg class="ico"><use href="#tree"/></svg><svg class="chev"><use href="#chev"/></svg></button>
              <button class="drop" aria-label="Display Mode"><svg class="ico"><use href="#layers"/></svg><svg class="chev"><use href="#chev"/></svg></button>
              <label class="search"><svg class="ico"><use href="#search"/></svg><input type="text" aria-label="Search"></label>
              <button class="drop" aria-label="Filter"><svg class="ico"><use href="#filter"/></svg><svg class="chev"><use href="#chev"/></svg></button>
              <button class="tog" aria-label="New Collection"><svg class="ico"><use href="#newcoll"/></svg></button>
            </div>
            <ul class="tree">
              <li class="root"><svg class="ico"><use href="#coll"/></svg><span>Scene Collection</span></li>
              <li class="lvl1"><svg class="tri"><use href="#tri-down"/></svg><input type="checkbox" id="c1" checked><span class="badge"><svg class="ico"><use href="#coll"/></svg></span><label for="c1">Collection</label><svg class="ico eye"><use href="#eye"/></svg></li>
              <li class="lvl2"><svg class="branch" viewBox="0 0 34 40"><path d="M8-8v48M8 20h24" stroke="#7a7a7a" stroke-width="2"/><path d="M4 13l11 7-11 7z" fill="#c8c8c8"/></svg><svg class="ico" viewBox="0 0 32 32" fill="#c9834c"><use href="#cam" width="32" height="32"/><circle cx="8" cy="10" r="2" fill="#2b2b2b"/><circle cx="20" cy="9" r="2" fill="#2b2b2b"/></svg><span>Camera</span><span class="badge data"><svg class="ico" viewBox="0 0 32 32" fill="none" stroke="#8ae98f" stroke-width="2"><path d="M5 15q-4-3-1-7 4-4 8 0 1-6 8-6 8 1 8 8 0 7-7 7H8zM8 19h14v11H8zM3 20h5v4H3zM22 25l7-5v11z"/><circle cx="20" cy="9" r="2"/></svg></span><svg class="ico eye"><use href="#eye"/></svg></li>
              <li class="lvl2"><svg class="branch" viewBox="0 0 34 40"><path d="M8 0v20h24" fill="none" stroke="#7a7a7a" stroke-width="2"/><path d="M4 13l11 7-11 7z" fill="#c8c8c8"/></svg><svg class="ico"><use href="#bulb"/></svg><span>Light</span><svg class="ico lamp" viewBox="0 0 32 32" fill="none" stroke="#8ae98f" stroke-width="2"><path d="M12 25a12 12 0 1 1 8 0M16 17v5M16 24v3M16 29v3"/><circle cx="16" cy="14" r="2"/></svg><svg class="ico eye"><use href="#eye"/></svg></li>
              <li class="lvl1"><svg class="tri"></svg><input type="checkbox" id="c2" checked><span class="badge clear"><svg class="ico"><use href="#coll"/></svg></span><label for="c2">Archipack</label><svg class="ico eye"><use href="#eye"/></svg></li>
            </ul>
          </section>

          <section class="properties">
            <div class="pr-header">
              <button class="drop" aria-label="Editor Type"><svg class="ico"><use href="#props"/></svg><svg class="chev"><use href="#chev"/></svg></button>
              <svg class="ico"><use href="#scene"/></svg><span>Scene</span>
              <svg class="sep" viewBox="0 0 8 14"><path d="M0 0l8 7-8 7z" fill="#2e2e2e"/></svg>
              <svg class="ico"><use href="#layers"/></svg><span>View Layer</span>
              <svg class="ico pin"><use href="#pin"/></svg>
            </div>
            <div class="pr-body">
              <nav class="ptabs">
                <button class="gap" aria-label="Tool"><svg class="ico"><use href="#tools"/></svg></button>
                <button aria-label="Render"><svg class="ico"><use href="#render"/></svg></button>
                <button aria-label="Output"><svg class="ico"><use href="#output"/></svg></button>
                <button aria-label="View Layer"><svg class="ico"><use href="#layers"/></svg></button>
                <button class="active" aria-label="Scene"><svg class="ico"><use href="#scene"/></svg></button>
                <button class="world" aria-label="World"><svg class="ico"><use href="#world"/></svg></button>
                <button aria-label="Texture"><svg class="ico"><use href="#texture"/></svg></button>
              </nav>
              <div class="panels">
                <h2><svg class="tri"><use href="#tri-down"/></svg>Scene<i class="grip"></i></h2>
                <div class="panel">
                  <label for="f-cam">Camera</label>
                  <div class="field"><svg class="ico"><use href="#object"/></svg><input id="f-cam" type="text" value="Camera"><button aria-label="Clear"><svg class="chev"><use href="#cross"/></svg></button></div>
                  <label for="f-bg">Background Scene</label>
                  <div class="field"><svg class="ico"><use href="#scene"/></svg><input id="f-bg" type="text"></div>
                  <label for="f-clip">Active Movie Clip</label>
                  <div class="field"><svg class="ico"><use href="#clap"/></svg><input id="f-clip" type="text"></div>
                </div>
                <h2><svg class="tri"><use href="#tri"/></svg>Units<i class="grip"></i></h2>
                <h2><svg class="tri"><use href="#tri"/></svg><input type="checkbox" id="grav" checked><label for="grav">Gravity</label><i class="grip"></i></h2>
                <h2><svg class="tri"><use href="#tri"/></svg>Keying Sets<i class="grip"></i></h2>
                <h2><svg class="tri"><use href="#tri"/></svg>Audio<i class="grip"></i></h2>
                <h2><svg class="tri"><use href="#tri"/></svg>Rigid Body World<i class="grip"></i></h2>
                <h2><svg class="tri"><use href="#tri"/></svg>Custom Properties<i class="grip"></i></h2>
              </div>
            </div>
          </section>
        </aside>
      </div>

      <footer class="statusbar">
        <span class="hint h1"><svg class="ico"><use href="#lmb"/></svg>Select</span>
        <span class="hint h2"><svg class="ico" viewBox="0 0 32 32"><use href="#lmb" x="-5" width="32" height="32"/><path d="M25 1q4 5 1 12M30 4v8" fill="none" stroke="#b0b0b0" stroke-width="2"/></svg>Box Select</span>
        <span class="hint h3"><svg class="ico"><use href="#mmb"/></svg>Dolly View</span>
        <span class="hint"><svg class="ico" viewBox="0 0 32 32"><path d="M14 1q6 0 6 5v9h-6z" fill="#b0b0b0"/><path d="M11 2q-9 0-9 7v14q0 8 9 8t9-8v-5M25 1q4 5 1 12M30 4v8" fill="none" stroke="#b0b0b0" stroke-width="2"/></svg>Lasso Select</span>
        <span class="stats">Collection | Verts:0 | Faces:0 | Tris:0 | Objects:0/2 | Mem: 36.4 MB | v2.80.74</span>
      </footer>
    </main>

    <div class="desktop">
      <svg class="wallpaper left" viewBox="0 0 180 168">
        <g fill="none"><path d="M60 172Q80 70 132-5" stroke="#1b1b1b" stroke-width="70"/><path d="M54 172Q70 90 120-5M84 172Q100 80 146-5" stroke="#262626" stroke-width="2"/><path d="M114 172Q130 70 172-5" stroke="#707070" stroke-width="3"/><path d="M12 172Q24 80 46 34" stroke="#4a4a4a" stroke-width="3"/><path d="M-2 20Q10 10 16-5" stroke="#777" stroke-width="3"/></g>
      </svg>
      <svg class="wallpaper right" viewBox="0 0 180 168">
        <g fill="none"><path d="M134-5Q134 66 0 108" stroke="#202020" stroke-width="26"/><path d="M0 106Q80 80 112 34" stroke="#4c4c4c" stroke-width="5"/><path d="M30 174Q120 168 186 136" stroke="#7c7c7c" stroke-width="9"/></g>
      </svg>

      <nav class="dock">
        <a href="#" class="run" aria-label="Finder"><svg viewBox="0 0 120 120"><defs><linearGradient id="fi" x2="0" y2="1"><stop stop-color="#63d2fb"/><stop offset="1" stop-color="#3a6ee8"/></linearGradient><linearGradient id="fw" x2="0" y2="1"><stop stop-color="#f8f8fb"/><stop offset="1" stop-color="#d8e4f2"/></linearGradient></defs><rect x="5" y="8" width="110" height="103" rx="6" fill="url(#fi)"/><path d="M62 8h47q6 0 6 6v91q0 6-6 6H71q-4-20-5-44H51Q52 32 62 8z" fill="url(#fw)"/><path d="M62 8Q52 32 51 67h15q1 24 5 44" fill="none" stroke="#1c2633" stroke-width="1"/><path d="M34 37v9M84 37v9M28 75q32 26 65 0" fill="none" stroke="#16202c" stroke-width="5" stroke-linecap="round"/></svg></a>
        <a href="#" aria-label="Siri"><svg viewBox="0 0 120 120"><defs><linearGradient id="siriMini" x1="0" y1="0" x2="0" y2="1"><stop stop-color="#c0307e"/><stop offset=".5" stop-color="#5c58b8"/><stop offset="1" stop-color="#1f4f98"/></linearGradient><radialGradient id="siriGlow"><stop stop-color="#fff"/><stop offset=".3" stop-color="#b0f4ff" stop-opacity=".8"/><stop offset="1" stop-color="#5ac8f0" stop-opacity="0"/></radialGradient><linearGradient id="siriTop" x2="0" y2="1"><stop stop-color="#5a1450"/><stop offset=".5" stop-color="#c02f86"/><stop offset="1" stop-color="#5c2c70"/></linearGradient></defs><circle cx="60" cy="60" r="59" fill="#dcdadd"/><circle cx="60" cy="60" r="54" fill="#130c28"/><path d="M18 34Q60-22 104 32q8 16 4 30Q80 54 60 62 38 26 18 34z" fill="url(#siriTop)"/><path d="M60 62Q88 18 106 52q0 10-46 10z" fill="#8c2c50"/><path d="M14 84Q14 36 36 36q20 4 24 24Q30 60 14 84z" fill="#8e87c4" opacity=".6"/><path d="M60 60Q90 50 104 72q2 14-10 8-16-10-34-20z" fill="#3fae8c" opacity=".9"/><path d="M60 62Q14 90 30 100q20 16 42 10Q58 90 60 62z" fill="#22509c" opacity=".8"/><path d="M60 62q18 20 14 48-12-10-14-48z" fill="#c060b8"/><path d="M18 88Q40 66 56 60L68 30l-3 28 42 2-40 5-2 14-8-14Q40 70 18 88z" fill="#c8f8ff" opacity=".8"/><circle cx="60" cy="60" r="24" fill="url(#siriGlow)"/></svg></a>
        <a href="#" aria-label="Launchpad"><svg viewBox="0 0 120 120"><defs><linearGradient id="la" x2="0" y2="1"><stop stop-color="#d7e4e9"/><stop offset="1" stop-color="#808080"/></linearGradient></defs><circle cx="60" cy="60" r="59" fill="#c8d0d3"/><circle cx="60" cy="60" r="54" fill="url(#la)"/><path d="M94 24Q70 26 54 46 46 54 44 60 28 58 18 66q10-2 17 2l11 15 10 2q2 8-1 18 12-12 15-26Q90 60 94 24zM31 80q10 0 12 9-8 10-18 12-4-8 6-21z" fill="#4b5054"/><ellipse cx="73" cy="48" rx="7" ry="7" fill="#c3cdd2"/></svg></a>
        <a href="#" class="run" aria-label="Safari"><svg viewBox="0 0 120 120"><defs><radialGradient id="sa"><stop stop-color="#5bc8e8"/><stop offset="1" stop-color="#2b66e0"/></radialGradient></defs><circle cx="60" cy="60" r="59" fill="#e9e9e9"/><circle cx="60" cy="60" r="54" fill="url(#sa)"/><circle cx="60" cy="60" r="48" fill="none" stroke="#fff" stroke-width="8" stroke-dasharray="1.500 3.530"/><path d="M97 23L53 54l13 13z" fill="#e5493d"/><path d="M24 97l29-43 13 13z" fill="#f0f0f0"/><path d="M24 97l42-30-6-6z" fill="#b8b8b8"/></svg></a>
        <a href="#" aria-label="Mail"><svg viewBox="0 0 120 120"><defs><linearGradient id="ma" x2="0" y2="1"><stop stop-color="#3c7ad8"/><stop offset="1" stop-color="#a8d4f2"/></linearGradient></defs><path d="M8 12l87-15 18 112-87 13z" fill="#f4f4f2" stroke="#f4f4f2" stroke-width="4" stroke-dasharray="4 3"/><path d="M16 19l72-13 16 97-72 11z" fill="url(#ma)"/><path d="M27 20l5 3 4 1 4 4 5 6 4 10 2 16 7 6 9 4 10 6 8 10 4 12-9-5-9-2-9-5-9-4-6 4-10 2-6-3 2-9 5-8-4-12-5-14-3-14z" fill="#6b4c2e"/><path d="M29 22l9 12 6 14 4 18M33 40l8 10 5 16M60 70l12 6 12 12 6 10" fill="none" stroke="#d8c09a" stroke-width="3"/><path d="M50 62q8 2 10 10l-6 10-12 4-5-3 5-12z" fill="#c29a5a"/><path d="M55 60l6 1 2 4-6 1z" fill="#f4efe4"/><circle cx="97" cy="92" r="27" fill="none" stroke="#385878" stroke-opacity=".5" stroke-width="2"/><circle cx="97" cy="92" r="17" fill="none" stroke="#385878" stroke-opacity=".5" stroke-width="2"/><path d="M91 92q6-5 12 0-3 10-6 10t-6-10z" fill="#44617d"/></svg></a>
        <a href="#" aria-label="Calendar"><svg viewBox="0 0 120 120"><path d="M3 20l95-14 20 96-102 18z" fill="#4c565d"/><path d="M7 16L96 1l4 25-89 15z" fill="#d9584f"/><path d="M11 41l89-15 13 70-92 15z" fill="#fafafa"/><path d="M20 103l92-15 1 8-92 15z" fill="#c8c8c6"/><text x="30" y="31" class="lug">LUG</text><text x="41" y="89" class="seven">7</text></svg></a>
        <a href="#" aria-label="Notes"><svg viewBox="0 0 120 120"><path d="M7 11L97-3l17 109-89 15z" fill="#fbfbf8"/><path d="M7 11L97-3l3 19-90 15z" fill="#f6d04b"/><path d="M11 34l89-14" stroke="#999" stroke-width="2" stroke-dasharray="2 2"/><path d="M13 44l89-14M15 54l88-14M16 64l89-14M18 74l88-14M20 84l88-14M21 94l88-14M23 104l88-14M25 113l87-14" stroke="#d0d0cc" stroke-width="2"/><path d="M25 121l89-15" stroke="#a08418" stroke-width="2"/></svg></a>
        <a href="#" aria-label="Reminders"><svg viewBox="0 0 120 120"><path d="M18 8l70-10q6-1 7 5l14 96q1 6-5 7l-72 12q-6 0-7-6L10 17q0-7 8-9z" fill="#fafafa"/><circle cx="25" cy="31" r="8" fill="#f09a3a"/><circle cx="29" cy="52" r="8" fill="#4aa3ea"/><circle cx="32" cy="73" r="8" fill="#7ecb4a"/><circle cx="36" cy="94" r="8" fill="#bb72d8"/><path d="M38 19l48-9M42 39l48-8M45 60l48-8M48 80l48-8M52 101l47-8" stroke="#c4c4c4" stroke-width="2"/></svg></a>
        <a href="#" aria-label="Maps"><svg viewBox="0 0 120 120"><path d="M-2 20L96 5l16 92-100 19z" fill="#f7f7f5"/><path d="M4 24l87-14 14 82-88 18z" fill="#e4e2dc"/><path d="M45 18l46-8 7 45q-18 2-33-12-15-12-20-25z" fill="#9fd67b"/><path d="M60 16q6 28 34 32" fill="none" stroke="#fff" stroke-width="9"/><path d="M5 40l12 12 5 58-4 1z" fill="#f3bccb"/><path d="M4 36l13 16 8 16 68 28" fill="none" stroke="#f5c344" stroke-width="11"/><path d="M22 22q12 30 18 84" fill="none" stroke="#fff" stroke-width="18"/><path d="M22 21q12 24 14 50" fill="none" stroke="#3b80d6" stroke-width="11"/><circle cx="34" cy="71" r="16" fill="#2f6fd0"/><path d="M34 60l8 21-8-4-8 4z" fill="#fff"/><circle cx="92" cy="84" r="29" fill="#f2f2f2"/><circle cx="92" cy="84" r="17" fill="#fff" stroke="#5c87a8" stroke-width="2"/><path d="M92 57l4 7h-8z" fill="#d8342c"/><text x="92" y="91" class="threed">3D</text></svg></a>
        <a href="#" aria-label="Photos"><svg viewBox="0 0 120 120" class="photos"><circle cx="60" cy="60" r="59" fill="#f0f0f0"/><g><ellipse cx="60" cy="34" rx="16" ry="25" fill="#f6a13c"/><ellipse cx="60" cy="34" rx="16" ry="25" fill="#f4e146" transform="rotate(45 60 60)"/><ellipse cx="60" cy="34" rx="16" ry="25" fill="#bcd95a" transform="rotate(90 60 60)"/><ellipse cx="60" cy="34" rx="16" ry="25" fill="#7cc687" transform="rotate(135 60 60)"/><ellipse cx="60" cy="34" rx="16" ry="25" fill="#7db6e6" transform="rotate(180 60 60)"/><ellipse cx="60" cy="34" rx="16" ry="25" fill="#a58fd0" transform="rotate(225 60 60)"/><ellipse cx="60" cy="34" rx="16" ry="25" fill="#d78ec0" transform="rotate(270 60 60)"/><ellipse cx="60" cy="34" rx="16" ry="25" fill="#ec5c48" transform="rotate(315 60 60)"/></g></svg></a>
        <a href="#" aria-label="Messages"><svg viewBox="0 0 120 120"><defs><linearGradient id="me" x2="0" y2="1"><stop stop-color="#74c3f4"/><stop offset="1" stop-color="#3c82f2"/></linearGradient></defs><path d="M60 7q58 2 58 49t-58 49q-10 0-17-2-6 8-19 9 6-8 5-16Q2 84 2 56 4 8 60 7z" fill="url(#me)"/><path d="M81 54q35 2 35 28 0 14-16 24 1 6 4 10-10-2-14-7-42 4-44-27 2-27 35-28z" fill="#eef4fc"/><g fill="#264f92"><circle cx="65" cy="83" r="6"/><circle cx="82" cy="83" r="6"/><circle cx="99" cy="83" r="6"/></g></svg></a>
        <a href="#" aria-label="Contacts"><svg viewBox="0 0 120 120"><path d="M90 8l9 1 3 25h-9z" fill="#c8ccce"/><path d="M94 34l9 1 3 20-10 1z" fill="#5ab4dc"/><path d="M96 56l10 1 3 20-9 1z" fill="#63c878"/><path d="M100 78l9 1 3 20-8 1z" fill="#dca03a"/><path d="M7 10L87-3q4 0 5 6l15 104-82 15q-3-1-4-6z" fill="#a67c45"/><path d="M7 10l7 1 14 110-3 1q-3-1-4-6z" fill="#7d5a2e"/><ellipse cx="60" cy="57" rx="30" ry="30" fill="#9c7440" stroke="#876231" stroke-width="2"/><path d="M40 74q12-8 8-16-4-20 8-19 9 3 4 19 2 8 2 26-15-1-22-10zM62 84q2-10 2-20-4-22 8-26 12 4 8 26 6 2 8 8-8 12-26 12z" fill="#866130"/></svg></a>
        <a href="#" aria-label="FaceTime"><svg viewBox="0 0 120 120"><defs><linearGradient id="ft" x2="0" y2="1"><stop stop-color="#78e882"/><stop offset="1" stop-color="#5ccb50"/></linearGradient></defs><rect y="9" width="107" height="94" rx="16" fill="url(#ft)"/><rect x="16" y="32" width="53" height="49" rx="10" fill="#f6f6f6"/><path d="M71 50l15-14q6-2 6 2v36q-1 3-5 1L71 62z" fill="#f2f2f2"/><circle cx="90" cy="82" r="29" fill="#f0f0f0"/><path d="M74 66q4-6 8-2l2 9-4 4q4 10 12 14l5-3 9 5q3 5-4 8-26-2-28-35z" fill="#4fc651"/></svg></a>
        <a href="#" aria-label="Pages"><svg viewBox="0 0 120 120"><path d="M6 11L97-3l16 110-89 14z" fill="#fafafa"/><path d="M6 11L97-3l3 18L9 31z" fill="#f0973a"/><text x="15" y="25" class="pages">PAGES</text><path d="M17 39l42-7 5 32-41 7z" fill="#3c8fe8"/><path d="M29 44q5-8 10 0 7-6 11 2 0 12-9 18-11-6-12-20z" fill="#f39a28"/><path d="M40 60l2 10" stroke="#4e8034" stroke-width="2"/><path d="M65 32l19-3M66 38l19-3M67 44l18-3M68 50l17-3M69 56l15-3M70 62l12-2M22 78l60-10M23 84l58-9M24 90l55-9M26 100l50-8M27 106l48-8" stroke="#b4b4b4" stroke-width="2"/><path d="M99 0q4-3 8 0L86 84l-9 1z" fill="#e99a35"/><path d="M86 84l-5 18-7 16 2-18 1-15z" fill="#333"/><path d="M99 4l3 1-9 40-3-1z" fill="#d9dcdf"/></svg></a>
        <a href="#" aria-label="Numbers"><svg viewBox="0 0 120 120"><path d="M5 67h111l2 47H3z" fill="#f2f2f2"/><path d="M3 113h115v4H3z" fill="#bcbcbc"/><path d="M8 76h108M8 84h108M8 92h108M8 100h108" stroke="#ccc"/><g stroke-width="0"><rect x="19" y="59" width="21" height="44" rx="3" fill="#d83a48"/><rect x="19" y="59" width="21" height="8" rx="3" fill="#f09090"/><rect x="42" y="37" width="22" height="66" rx="3" fill="#ea8a32"/><rect x="42" y="37" width="22" height="8" rx="3" fill="#f8c878"/><rect x="66" y="4" width="21" height="99" rx="3" fill="#55b948"/><rect x="66" y="4" width="21" height="8" rx="3" fill="#9ae49c"/><rect x="90" y="24" width="21" height="79" rx="3" fill="#3c7fe8"/><rect x="90" y="24" width="21" height="8" rx="3" fill="#84d0f4"/></g></svg></a>
        <a href="#" aria-label="Keynote"><svg viewBox="0 0 120 120"><path d="M57 50h6v62h-6z" fill="#a9b4bc"/><ellipse cx="60" cy="112" rx="26" ry="9" fill="#b8cbe0"/><ellipse cx="60" cy="110" rx="18" ry="5" fill="#e0eaf4"/><path d="M16 1h89l8 44H7z" fill="#4596ea"/><path d="M7 44h106v6H7z" fill="#2268b0"/><path d="M29 8h66l2 31H26z" fill="#fafafa"/><text x="33" y="16" class="keynote">KEYNOTE</text><circle cx="47" cy="27" r="10" fill="#4f9de0"/><path d="M47 27V17a10 10 0 0 1 10 10z" fill="#c45cd0"/><path d="M47 27h10a10 10 0 0 1-9 10z" fill="#e25555"/><path d="M47 27l1 10q-7 0-9-5z" fill="#9ccf52"/><path d="M66 20h16M66 24h16M66 28h16M66 32h16" stroke="#b8b8b8"/></svg></a>
        <a href="#" class="run" aria-label="iTunes"><svg viewBox="0 0 120 120"><defs><linearGradient id="it" x1="0" y1="0" x2="1" y2="1"><stop stop-color="#f2604c"/><stop offset=".5" stop-color="#b45cd8"/><stop offset="1" stop-color="#4fc8f6"/></linearGradient><linearGradient id="it2" x2="0" y2="1"><stop stop-color="#f35a5e"/><stop offset=".6" stop-color="#8c56e8"/><stop offset="1" stop-color="#5aa8f4"/></linearGradient></defs><circle cx="60" cy="60" r="60" fill="url(#it)"/><circle cx="60" cy="60" r="53" fill="#f2f3f8"/><path d="M45 32l41-10v60q-1 7-11 8-11 0-11-8 1-8 15-9V42l-27 6v42q-1 7-11 8-11-1-10-9 2-8 14-8z" fill="url(#it2)"/></svg></a>
        <a href="#" aria-label="Books"><svg viewBox="0 0 120 120"><defs><linearGradient id="bo" x2="0" y2="1"><stop stop-color="#f8b93c"/><stop offset="1" stop-color="#cf5620"/></linearGradient></defs><circle cx="60" cy="60" r="59" fill="#eee"/><circle cx="60" cy="60" r="54" fill="url(#bo)"/><path d="M59 40Q42 24 23 38v50q20-12 36 4zM62 40q17-16 36-2v50q-20-12-36 4z" fill="#f4f4f4"/></svg></a>
        <a href="#" aria-label="App Store"><svg viewBox="0 0 120 120"><defs><linearGradient id="as" x2="0" y2="1"><stop stop-color="#5cc6fa"/><stop offset="1" stop-color="#2e62e4"/></linearGradient></defs><circle cx="60" cy="60" r="59" fill="#e6e6e6"/><circle cx="60" cy="60" r="54" fill="url(#as)"/><path d="M66 26L38 74M55 26l37 62M25 70h42M79 70h17M34 80l-5 9" stroke="#fff" stroke-width="9" stroke-linecap="round"/></svg></a>
        <a href="#" aria-label="System Preferences"><svg viewBox="0 0 120 120"><defs><linearGradient id="pr" x2="0" y2="1"><stop stop-color="#d2e2ea"/><stop offset="1" stop-color="#77797b"/></linearGradient></defs><rect x="1" y="5" width="118" height="110" rx="5" fill="url(#pr)"/><circle cx="60" cy="60" r="48" fill="#242424"/><circle cx="60" cy="60" r="40" fill="none" stroke="#c4c4c4" stroke-width="6" stroke-dasharray="4 3"/><circle cx="60" cy="60" r="34" fill="none" stroke="#b4b4b4" stroke-width="7"/><path d="M60 60h32M60 60L44 32M60 60L44 88" stroke="#b8b8b8" stroke-width="7"/><circle cx="60" cy="60" r="6" fill="#ccc"/></svg></a>
        <a href="#" aria-label="QuickTime Player"><svg viewBox="0 0 120 120"><defs><linearGradient id="qt" x2="0" y2="1"><stop stop-color="#a2a8b2"/><stop offset=".5" stop-color="#4a4f58"/><stop offset="1" stop-color="#2a2a2c"/></linearGradient><linearGradient id="qb" x2="0" y2="1"><stop stop-color="#1f48d8"/><stop offset="1" stop-color="#5cccf8"/></linearGradient></defs><circle cx="60" cy="60" r="59" fill="url(#qt)"/><circle cx="60" cy="60" r="38" fill="url(#qb)"/><path d="M48 58q0-12 12-10 8 4 14 16l22 32 12 8q14 4 12 16-16 0-24-4-14-8-22-22z" fill="#44474c"/></svg></a>
        <span class="divider"></span>
        <a href="#" class="run" aria-label="Spotify"><svg viewBox="0 0 120 120"><circle cx="60" cy="60" r="60" fill="#68d470"/><path d="M24 39q40-12 76 10M28 62q36-9 64 9M31 81q30-7 54 8" fill="none" stroke="#161616" stroke-width="9" stroke-linecap="round"/></svg></a>
        <a href="#" class="run" aria-label="Blender"><svg viewBox="0 0 120 120"><use href="#blender" width="124" height="120" fill="#dc8430"/><circle cx="79" cy="67" r="26" fill="#fff"/><circle cx="79" cy="67" r="16" fill="#2e5584"/></svg></a>
        <span class="divider tall"></span>
        <a href="#" aria-label="Downloads"><svg viewBox="0 0 120 120"><defs><linearGradient id="dl" x2="0" y2="1"><stop stop-color="#68b0dc"/><stop offset="1" stop-color="#7cb4d4"/></linearGradient></defs><path d="M-3 14q0-4 5-4h32q4 0 5 4l3 7h77q4 0 4 4v20H-3z" fill="#4e88a8"/><path d="M-3 31q0-5 5-5h116q5 0 5 5v74q0 4-5 4H2q-5 0-5-4z" fill="url(#dl)"/><path d="M-3 98h126M-3 103h126" stroke="#5c9cc0" stroke-width="2"/><circle cx="60" cy="65" r="28" fill="#4f90ba"/><path d="M54 49h13v18h9L60 84 45 67h9z" fill="#7ab8dc"/></svg></a>
        <a href="#" aria-label="Trash"><svg viewBox="0 0 120 120"><defs><linearGradient id="tr"><stop stop-color="#4e5052"/><stop offset=".5" stop-color="#8d8f91"/><stop offset="1" stop-color="#45474a"/></linearGradient></defs><path d="M12 14h96L98 108q-2 12-38 12t-37-12z" fill="url(#tr)" opacity=".9"/><ellipse cx="60" cy="14" rx="48" ry="10" fill="#3a3b3d" stroke="#8a8c8e" stroke-width="2"/><path d="M22 16L26 2l12-5 8-3 6 9 12-8 8-4 10 10 14 4 2 12q-30 10-76-1z" fill="#d8d6d2"/><path d="M40 8l16 4-8 8zM62 4l14 4-4 12zM80 4l8 8-8 6z" fill="#5c5450"/><path d="M46 6l10-3 2 6z" fill="#5cd0c0"/><path d="M66 10l6-4 3 9z" fill="#b8602c"/><path d="M32 2l6 10-8 4zM76-2l8 8" fill="#888" stroke="#777"/><path d="M76 30q-10 8-22 12 4 6 12 2 10-4 10-14z" fill="#b8babc" opacity=".8"/></svg></a>
      </nav>
    </div>

    <script src="script.js"></script>
  </body>
</html>
```

FILE: styles.css
```css
* { box-sizing: border-box; }

html { background: #0d0d0d; }

body {
  margin: 0;
  min-height: 100vh;
  display: flex;
  flex-direction: column;
  background: #080808;
  color: #e0e0e0;
  font-family: "DejaVu Sans", sans-serif;
  font-size: 21px;
  font-kerning: none;
  line-height: 28px;
  overflow-x: hidden;
}

button, input, select {
  margin: 0;
  padding: 0;
  border: 0;
  background: none;
  color: inherit;
  font: inherit;
  font-kerning: inherit;
  text-shadow: inherit;
}

button, .pick, .range {
  display: flex;
  align-items: center;
  justify-content: center;
}

a { color: inherit; text-decoration: none; }
svg { display: block; flex: none; overflow: visible; }

.sprite { position: absolute; width: 0; height: 0; overflow: hidden; }
.ico { width: 32px; height: 32px; }
.chev { width: 18px; height: 18px; }
.tri { width: 12px; height: 14px; }
.flip { transform: scaleX(-1); }

/* system menu bar */
.menubar {
  height: 44px;
  display: flex;
  justify-content: space-between;
  align-items: center;
  padding: 0 46px 0 40px;
  background: radial-gradient(ellipse 240px 100px at 1700px 0, #291c1a, transparent),
              radial-gradient(ellipse 160px 80px at 130px 40px, #241c1a, transparent), #1c1c1c;
  color: #fff;
  font-family: Inter, sans-serif;
  font-size: 28px;
}

.menubar-left, .menubar-right { display: flex; align-items: center; }
.menubar-left { gap: 40px; }
.apple svg { width: 28px; height: 34px; }
.app-name { font-weight: 700; }
.menubar-right { font-size: 27px; font-weight: 500; }
.menubar-right svg { height: 32px; }
.m-cap { width: 22px; margin-right: 24px; }
.m-cc { width: 42px; margin-right: 22px; }
.m-mal { width: 38px; margin-right: 28px; }
.m-bt { width: 22px; margin-right: 28px; }
.m-wifi { width: 42px; margin-right: 27px; }
.m-eject { width: 24px; margin-right: 34px; }
.menubar-right .m-eject { height: 20px; }
.m-flag { width: 32px; margin-right: 10px; }
.lang { font-size: 22px; font-weight: 400; margin-right: 34px; }
.clock { margin-right: 30px; }
.user { margin-right: 32px; }
.m-search { width: 30px; margin-right: 35px; }
.m-siri { width: 32px; margin-right: 24px; }
.m-list { width: 36px; }

/* window */
.window {
  flex: 1;
  display: flex;
  flex-direction: column;
  margin-top: 2px;
  border-radius: 10px;
  background: #1f1f1f;
  border-bottom: 2px solid #555;
  overflow: hidden;
}

.titlebar {
  height: 44px;
  display: grid;
  grid-template-columns: 1fr auto 1fr;
  align-items: center;
  padding: 0 16px;
  background: linear-gradient(#464542, #393835);
  border-top: 2px solid #757573;
  border-bottom: 2px solid #000;
}

.titlebar h1 {
  margin: 0;
  color: #b9b8b5;
  font: 400 26px/32px Inter, sans-serif;
}

.lights { display: flex; gap: 16px; }
.light { width: 24px; height: 24px; border-radius: 50%; }
.red { background: radial-gradient(circle, #7c1210 4px, #ed6a5e 5px); }
.yellow { background: #dfbe4b; }
.green { background: #76c14c; }

.topbar {
  height: 50px;
  display: flex;
  align-items: center;
  padding: 0 19px 0 17px;
  background: #232323;
}

.menus { display: flex; width: 506px; font-kerning: auto; }
.menus button { height: 38px; padding: 0 15px; text-shadow: 0 2px 2px #000; }
.menus .logo { padding: 0 3px; }
.logo svg { width: 32px; height: 30px; }

.tabs { display: flex; gap: 4px; align-self: flex-end; flex: 1; font-kerning: auto; }
.tabs button {
  height: 38px;
  padding: 0 18px;
  border-radius: 9px 9px 0 0;
  background: #2a2a2a;
  color: #9b9b9b;
  text-shadow: 0 1px 2px #000;
}
.tabs .active { background: #424242; color: #fff; }
.tabs .add-tab { width: 36px; padding: 0; }
.add-tab svg { width: 18px; height: 18px; }

.datablock {
  display: flex;
  gap: 1px;
  height: 38px;
  margin-left: 13px;
  border-radius: 8px;
  background: #3a3a3a;
  box-shadow: 0 0 0 1px #3a3a3a;
  overflow: hidden;
}
.datablock .drop { height: 38px; width: 62px; background: #282828; border-radius: 0; box-shadow: none; }
.datablock input { width: 238px; padding: 0 14px; background: #1d1d1d; color: #ddd; }
.datablock .lit { width: 39px; background: #585858; }
.datablock .off { width: 39px; background: #333; color: #666; }

/* editors */
.areas {
  flex: 1;
  display: grid;
  grid-template-columns: 1fr 705px;
  gap: 7px;
  padding: 7px 2px 6px;
}
.main-col, .side-col { display: flex; flex-direction: column; gap: 7px; min-width: 0; }
.viewport, .timeline, .outliner, .properties { border-radius: 10px; overflow: hidden; }

.drop, .pick, .tog, .arrow, .textmenus button {
  height: 37px;
  border-radius: 8px;
  background: #2b2b2b;
  box-shadow: 0 0 0 2px rgba(255, 255, 255, .03);
  text-shadow: 0 1px 2px #000;
}
.drop { width: 60px; gap: 4px; }
.pick { width: 214px; gap: 12px; padding: 0 2px 0 5px; font-kerning: auto; }
.pick.wide { width: 156px; }
.pick select { appearance: none; flex: 1; min-width: 0; }
.pick option { background: #2b2b2b; }
.tog { width: 36px; background: #585858; color: #e6e6e6; }
.tog.dim { color: #adadad; }
.tog.on { background: #5078b8; color: #fff; }
.arrow { width: 38px; }
.joined { display: flex; gap: 2px; }
.joined > * { border-radius: 0; }
.joined > :first-child { border-radius: 8px 0 0 8px; }
.joined > :last-child { border-radius: 0 8px 8px 0; }
.group { display: flex; gap: 14px; align-items: center; }
.group.end { justify-content: flex-end; }
.textmenus { display: flex; gap: 5px; }
.textmenus button { padding: 0 13px; }

.viewport { position: relative; flex: 1; background: #3a3a3a; }
.scene-grid { position: absolute; inset: 0; width: 100%; height: 100%; }

.vp-header {
  position: relative;
  display: grid;
  grid-template-columns: 1fr auto 1fr;
  padding: 6px 16px;
}
.center { position: relative; margin-right: 44px; }
.center > * { position: relative; }
.center .joined .drop { width: 62px; }
.center .faint { background: rgba(50, 50, 50, .6); color: #999; }
.center .cam-frame {
  position: absolute;
  inset: 11px 24px auto 226px;
  height: 26px;
  border: 1px solid #ddd;
  background: #111;
}

/* everything inside the render frame is dimmed */
.passepartout {
  position: absolute;
  inset: 47px 48px 49px 165px;
  border: 1px solid #b4b4b4;
  background: rgba(0, 0, 0, .7);
  background-clip: padding-box;
  pointer-events: none;
}

.view-info {
  position: absolute;
  left: 155px;
  top: 68px;
  display: grid;
  row-gap: 12px;
  color: #fff;
  text-shadow: 0 1px 2px #000;
}

.nav { position: absolute; top: 68px; right: 171px; display: flex; gap: 5px; }
.nav button { width: 56px; height: 56px; border-radius: 50%; background: #2e2e2e; }
.nav svg { width: 34px; height: 34px; }

.gizmo { position: absolute; top: 70px; right: 18px; width: 160px; height: 160px; }
.gizmo text { font-size: 22px; text-anchor: middle; fill: #000; }

.toolshelf { position: relative; display: grid; gap: 14px; width: 81px; margin: 19px 16px; }
.toolset { display: grid; gap: 2px; border-radius: 8px; overflow: hidden; background: #383838; }
.toolset button { position: relative; height: 67px; padding-right: 6px; background: #303030; }
.toolset .on { background: #5880c2; }
.toolset svg { width: 48px; height: 48px; }
.toolset .more::after {
  content: "";
  position: absolute;
  right: 4px;
  bottom: 4px;
  border: 4px solid transparent;
  border-right-color: #999;
  border-bottom-color: #999;
}
.toolset .on::after { border-right-color: #a9bfe0; border-bottom-color: #a9bfe0; }

.npanel, .tl-left, .tl-right { position: absolute; right: 0; width: 15px; height: 28px; background: #2e2e2e; border-radius: 5px 0 0 5px; }
.npanel { top: 79px; }
.npanel svg, .tl-left svg, .tl-right svg { width: 12px; height: 18px; }

/* timeline */
.timeline { position: relative; background: #404040; }
.tl-header {
  display: grid;
  grid-template-columns: 1fr auto 1fr;
  align-items: center;
  height: 50px;
  padding: 0 38px 0 16px;
  background: #383838;
  text-shadow: 0 1px 2px #000;
}
.word { height: 37px; gap: 11px; padding: 0 3px 0 15px; background: #2b2b2b; box-shadow: 0 0 0 2px rgba(255, 255, 255, .03); }
.plain { padding: 0 15px; }
.transport { margin-right: 22px; }
.transport .joined .tog { width: 38px; }
.transport .joined { gap: 1px; }
.num { width: 146px; height: 37px; border-radius: 8px; background: #585858; text-align: center; }
.range { height: 37px; width: 179px; justify-content: space-between; padding: 0 25px 0 31px; background: #585858; }
.range.last { width: 169px; }
.range input { width: 60px; text-align: right; }

.ruler {
  display: grid;
  grid-template-columns: repeat(25, 1fr);
  align-items: center;
  height: 46px;
  padding: 2px 62px 0 173px;
  background: #2a2a2a;
  color: #a6a6a6;
  text-align: center;
}

.tracks { display: grid; padding: 0 62px 0 123px; background: linear-gradient(90deg, #353535 123px, #404040 123px calc(100% - 125px), #353535 calc(100% - 125px)); }
.lines, .scrollbar { grid-area: 1 / 1; }
.lines {
  height: 48px;
  margin-left: 50px;
  background: linear-gradient(90deg, #393939 2px, transparent 2px calc(50% - 1px), #2c2c2c calc(50% - 1px) calc(50% + 1px), transparent calc(50% + 1px)) 0 0 / 4% 100%;
}
.scrollbar {
  display: flex;
  justify-content: space-between;
  align-self: end;
  height: 20px;
  margin: 0 -46px 4px -107px;
  border: 2px solid #3c3c3c;
  border-radius: 10px;
  background: #686868;
}
.scrollbar i { width: 14px; height: 14px; margin: 1px; border-radius: 50%; background: #4a4a4a; border: 1px solid #333; }

.playhead {
  position: absolute;
  left: 100px;
  top: 55px;
  width: 48px;
  height: 35px;
  border-radius: 8px;
  background: #5078c0;
  color: #fff;
  line-height: 35px;
  text-align: center;
}
.playhead::after { content: ""; position: absolute; left: 23px; top: 41px; width: 1px; height: 26px; background: #5078c0; }
.tl-left, .tl-right { top: 79px; }
.tl-left { left: 0; right: auto; border-radius: 0 5px 5px 0; }

/* outliner */
.outliner {
  flex: 622 0 0;
  background: repeating-linear-gradient(#282828 0 40px, #2c2c2c 40px 80px) 0 51px;
}
.ol-header, .pr-header {
  display: flex;
  align-items: center;
  height: 50px;
  padding: 0 17px 0 18px;
  background: #3a3a3a;
}
.ol-header { gap: 14px; }
.search {
  display: flex;
  align-items: center;
  width: 230px;
  height: 37px;
  margin: 0 auto 0 51px;
  padding: 0 6px;
  border-radius: 8px;
  background: #1d1d1d;
}
.search input { flex: 1; min-width: 0; }

.tree { margin: 0; padding: 3px 0 0; list-style: none; color: #c8c8c8; }
.tree li { display: flex; align-items: center; height: 40px; padding-right: 18px; text-shadow: 0 1px 2px #000; }
.tree .root { padding-left: 43px; gap: 12px; }
.tree .lvl1 { padding-left: 52px; }
.tree .lvl2 { padding-left: 88px; }
.branch { width: 34px; height: 40px; }
.lvl2 span:not(.badge) { margin-left: 13px; }
.eye { margin-left: auto; }
.badge { width: 41px; height: 36px; display: grid; place-items: center; margin: 0 8px 0 9px; border-radius: 9px; background: #464646; }
.badge.clear { background: none; }
.badge.data { margin-left: 40px; background: #5a5a5a; }
.lamp { width: 32px; margin-left: 43px; }

input[type="checkbox"] { appearance: none; width: 20px; height: 20px; border-radius: 3px; background: #dcdcdc; }
input[type="checkbox"]::before {
  content: "";
  display: block;
  width: 100%;
  height: 100%;
  background: #222;
  clip-path: polygon(14% 52%, 28% 42%, 42% 60%, 78% 14%, 90% 26%, 44% 86%);
}
.lvl1 input { margin-left: 25px; }

/* properties */
.properties { flex: 1316 0 0; display: flex; flex-direction: column; background: #424242; }
.pr-header { gap: 15px; padding-right: 20px; text-shadow: 0 1px 2px #000; }
.pr-header .drop { margin-right: 13px; }
.pr-header .sep { width: 8px; height: 14px; margin: 0 13px; }
.pr-header .pin { margin-left: auto; }
.pr-body { flex: 1; display: grid; grid-template-columns: 56px 1fr; }
.ptabs { padding: 18px 0 0 4px; background: #222; color: #c4c4c4; }
.ptabs button { width: 52px; height: 53px; margin-bottom: 3px; border-radius: 9px 0 0 9px; background: #2b2b2b; }
.ptabs .gap { margin-bottom: 18px; }
.ptabs .world { margin-bottom: 35px; }
.ptabs .active { background: #424242; color: #f0f0f0; }

.panels h2 {
  display: flex;
  align-items: center;
  height: 48px;
  margin: 0;
  padding: 0 15px 0 18px;
  color: #d2d2d2;
  font-size: 23px;
  font-weight: 400;
  text-shadow: 0 2px 2px #222;
}
.panels h2 .tri { margin-right: 15px; }
.panels h2 input { width: 24px; height: 24px; margin: 0 13px 0 3px; background: #5078b8; }
.panels h2 input::before { background: #e0e8f8; }
.grip {
  width: 22px;
  height: 12px;
  margin-left: auto;
  background: radial-gradient(circle at 1px 1px, #999 1px, transparent 2px) 0 0 / 6px 6px,
              radial-gradient(circle at 1px 3px, #111 1px, transparent 2px) 0 0 / 6px 6px;
}
.panel {
  display: grid;
  grid-template-columns: 48% minmax(0, 1fr);
  align-items: center;
  gap: 13px 19px;
  padding: 17px 15px 19px 7px;
  background: #383838;
  text-shadow: 0 2px 2px #111;
}
.panel label { text-align: right; }
.field { display: flex; align-items: center; gap: 11px; height: 37px; padding: 0 11px 0 6px; border-radius: 8px; background: #1d1d1d; box-shadow: 0 0 0 2px #404040; color: #e8e8e8; }
.field input { flex: 1; min-width: 0; }

.statusbar { display: flex; align-items: center; height: 36px; padding: 0 61px 0 19px; background: #2e2e2e; color: #a4a4a4; text-shadow: 0 1px 2px #000; }
.hint { display: flex; align-items: center; gap: 17px; }
.h1 { width: 136px; }
.h2 { width: 403px; }
.h3 { width: 540px; }
.stats { margin-left: auto; }

/* dock */
.desktop { position: relative; display: flex; justify-content: center; height: 168px; background: #101010; }
.wallpaper { position: absolute; bottom: 0; width: 180px; height: 168px; overflow: hidden; }
.wallpaper.left { left: 0; }
.wallpaper.right { right: 0; }
.dock {
  position: relative;
  display: flex;
  padding: 0 6px;
  border: 1px solid #555;
  border-top: 2px solid #525252;
  border-bottom: 0;
  border-radius: 10px 10px 0 0;
  background:
    radial-gradient(ellipse 230px 240px at 740px 168px, #8a4828, transparent),
    radial-gradient(ellipse 360px 260px at 1660px 168px, #854733, transparent),
    radial-gradient(ellipse 160px 160px at 1120px 168px, #505050, transparent),
    radial-gradient(ellipse 400px 200px at 2200px 80px, #3a302e, transparent), #2b2b2b;
}
.dock a { position: relative; width: 144px; padding: 18px 12px 0; }
.dock a svg { width: 120px; height: 120px; }
.dock .run::after { content: ""; position: absolute; left: 68px; bottom: 4px; width: 8px; height: 8px; border-radius: 50%; background: #b8b8b8; }
.divider { width: 64px; background: linear-gradient(#777, #777) 33px 40px / 2px 84px no-repeat; }
.divider.tall { background-position: 33px 20px; background-size: 2px 124px; }
.photos g ellipse { mix-blend-mode: multiply; }
.photos { isolation: isolate; }
.dock text { font-family: Inter, sans-serif; }
.lug { fill: #fff; font-size: 20px; }
.seven { fill: #222; font-size: 60px; }
.threed { fill: #333; font-size: 18px; text-anchor: middle; }
.pages { fill: #fff; font-size: 14px; }
.keynote { fill: #444; font-size: 8px; }
```

FILE: script.js
```js
// Perspective floor: (u, v) on the ground plane -> viewport coordinates
function project(u, v) {
  const w = 1 + 0.0699 * u - 0.1408 * v;
  return [(1600 + 480 * u - 56 * v) / w, (1080 - 10.6 * u + 10.8 * v) / w];
}

function segment(a, b) {
  const p = project(...a);
  const q = project(...b);
  return `M${p[0].toFixed(1)} ${p[1].toFixed(1)}L${q[0].toFixed(1)} ${q[1].toFixed(1)}`;
}

const FAR = 60;
const NEAR = 0.15;

// furthest v / smallest u that is still in front of the camera
const maxV = u => (1 + 0.0699 * u - NEAR) / 0.1408;
const minU = v => (NEAR - 1 + 0.1408 * v) / 0.0699;

const alongV = u => segment([u, -FAR], [u, maxV(u)]);
const alongU = v => segment([minU(v), v], [FAR, v]);

let d = '';
for (let i = -FAR; i <= FAR; i++) {
  if (i === 0) continue;
  if (maxV(i) > -FAR) d += alongV(i);
  if (minU(i) < FAR) d += alongU(i);
}

document.getElementById('grid-lines').setAttribute('d', d);
document.getElementById('axis-x').setAttribute('d', alongV(0));
document.getElementById('axis-y').setAttribute('d', alongU(0));
```
